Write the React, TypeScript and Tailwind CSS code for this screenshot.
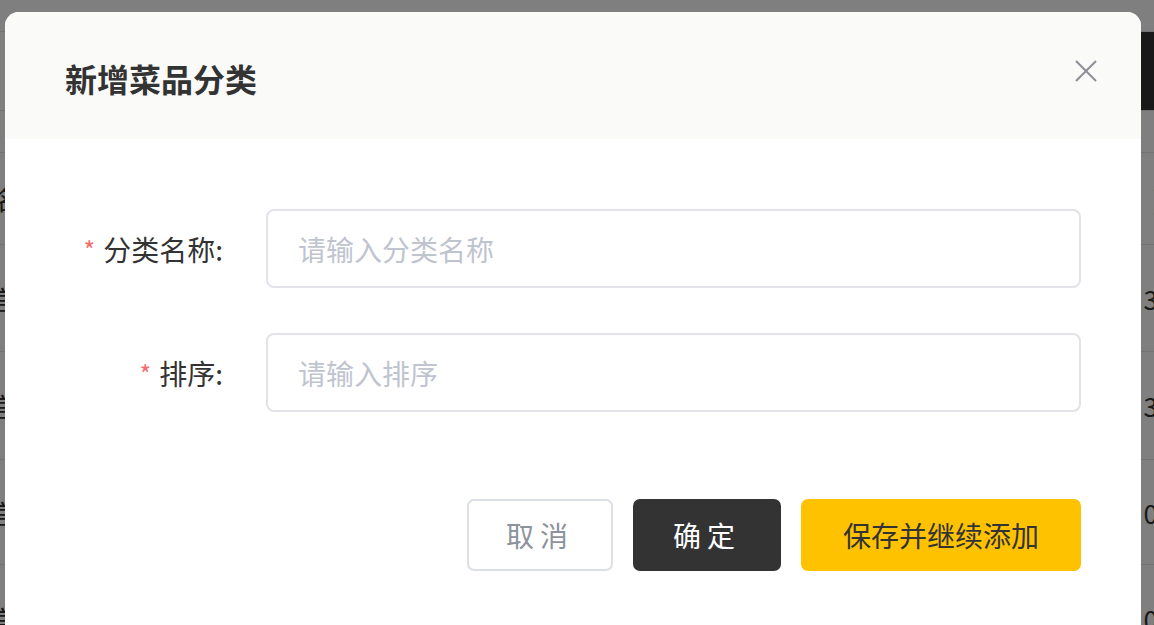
import React from "react";

const font = { fontFamily: '"Noto Sans CJK SC", "Noto Sans", sans-serif' };

const rows = [
  { y: "h-[107px]", l: "宫", r: "3" },
  { y: "h-[108px]", l: "宫", r: "3" },
  { y: "h-[105px]", l: "宫", r: "0" },
  { y: "h-[108px]", l: "宫", r: "0" },
];

function Background() {
  return (
    <div className="flex flex-col h-full w-full bg-white">
      <div className="h-[32px] shrink-0 border-b border-[#e4e4e4]" />
      <div className="h-[79px] shrink-0 flex justify-end border-b border-[#e4e4e4]">
        <div className="w-[20px] bg-[#333333]" />
      </div>
      <div className="h-[41px] shrink-0" />
      <div className="h-[93px] shrink-0 flex items-center justify-between border-t border-b border-[#e4e4e4] text-[26px] text-[#333]">
        <span className="-ml-[6px]">名</span>
        <span className="text-[#3a6ab0] -mr-[8px]">]</span>
      </div>
      {rows.map((row, i) => (
        <div
          key={i}
          className={`${row.y} shrink-0 flex items-center justify-between border-b border-[#e4e4e4] text-[26px] text-[#333]`}
        >
          <span className="-ml-[10px]">{row.l}</span>
          <span className="-mr-[4px]">{row.r}</span>
        </div>
      ))}
    </div>
  );
}

function CloseIcon() {
  return (
    <svg width="22" height="22" viewBox="0 0 22 22" fill="none">
      <path d="M1 1L21 21M21 1L1 21" stroke="#8c8f96" strokeWidth="2" />
    </svg>
  );
}

function Field({ label, placeholder }: { label: string; placeholder: string }) {
  return (
    <div className="flex items-center">
      <div className="w-[261px] pr-[43px] flex justify-end items-center text-[28px] text-[#333]">
        <span className="text-[#f56c6c] mr-[8px] text-[25px] leading-none mt-[2px]">*</span>
        <span>{label}:</span>
      </div>
      <div className="w-[815px] h-[79px] rounded-[8px] border-2 border-[#e2e3e8] flex items-center pl-[30px] text-[28px] text-[#c0c4cf]">
        {placeholder}
      </div>
    </div>
  );
}

export default function App() {
  return (
    <div className="relative w-full h-[625px] overflow-hidden" style={font}>
      <Background />
      <div className="absolute inset-0 bg-black/50" />
      <div className="absolute left-[5px] top-[12px] w-[1136px] h-[640px] bg-white rounded-[14px] overflow-hidden">
        <div className="h-[127px] bg-[#fafaf9] flex items-center justify-between pl-[60px] pr-[44px]">
          <h2 className="text-[32px] font-bold text-[#333] mt-[4px]">新增菜品分类</h2>
          <button className="mb-[10px]">
            <CloseIcon />
          </button>
        </div>
        <div className="pt-[70px] flex flex-col gap-[45px]">
          <Field label="分类名称" placeholder="请输入分类名称" />
          <Field label="排序" placeholder="请输入排序" />
        </div>
        <div className="flex justify-end gap-[20px] pr-[60px] mt-[87px]">
          <button className="w-[146px] h-[72px] rounded-[7px] border-2 border-[#dcdfe6] text-[28px] text-[#8d929c] tracking-[6px]">
            取消
          </button>
          <button className="w-[148px] h-[72px] rounded-[7px] bg-[#333333] text-[28px] text-white tracking-[6px]">
            确定
          </button>
          <button className="w-[280px] h-[72px] rounded-[7px] bg-[#ffc200] text-[28px] text-[#333]">
            保存并继续添加
          </button>
        </div>
      </div>
    </div>
  );
}
